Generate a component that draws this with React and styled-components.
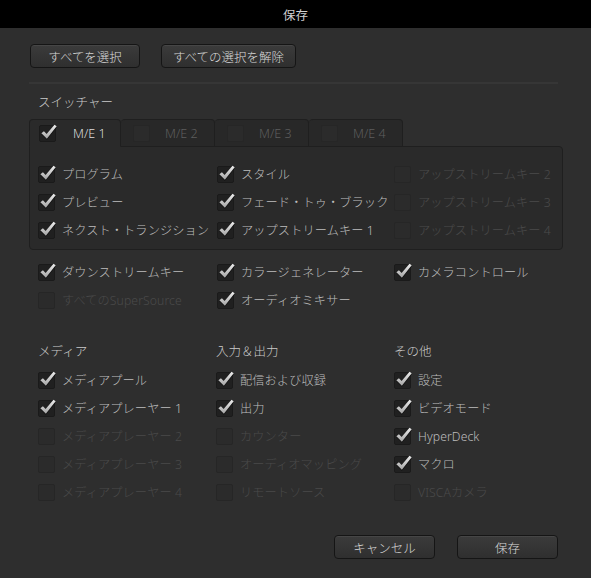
import styled, { createGlobalStyle } from "styled-components";

const GlobalStyle = createGlobalStyle`
    * { box-sizing: border-box; }
    body {
        margin: 0;
        background: #2e2e2e;
        font-family: "Noto Sans", "Noto Sans CJK JP", sans-serif;
    }
`

const switcherRows = [
    [["プログラム", true], ["スタイル", true], ["アップストリームキー 2", false, true]],
    [["プレビュー", true], ["フェード・トゥ・ブラック", true], ["アップストリームキー 3", false, true]],
    [["ネクスト・トランジション", true], ["アップストリームキー 1", true], ["アップストリームキー 4", false, true]],
]

const extraRows = [
    [["ダウンストリームキー", true], ["カラージェネレーター", true], ["カメラコントロール", true]],
    [["すべてのSuperSource", false, true], ["オーディオミキサー", true], null],
]

const sections = [
    {
        title: "メディア",
        items: [
            ["メディアプール", true],
            ["メディアプレーヤー 1", true],
            ["メディアプレーヤー 2", false, true],
            ["メディアプレーヤー 3", false, true],
            ["メディアプレーヤー 4", false, true],
        ],
    },
    {
        title: "入力＆出力",
        items: [
            ["配信および収録", true],
            ["出力", true],
            ["カウンター", false, true],
            ["オーディオマッピング", false, true],
            ["リモートソース", false, true],
        ],
    },
    {
        title: "その他",
        items: [
            ["設定", true],
            ["ビデオモード", true],
            ["HyperDeck", true],
            ["マクロ", true],
            ["VISCAカメラ", false, true],
        ],
    },
]

function Tick() {
    return (
        <TickSvg viewBox="0 0 20 20">
            <defs>
                <linearGradient id="tick" x1="0" y1="0" x2="0" y2="1">
                    <stop offset="0" stopColor="#eeeeee" />
                    <stop offset="1" stopColor="#a4a4a4" />
                </linearGradient>
            </defs>
            <path d="M2.5 10.8 L5.2 8.6 L8 11.6 L16.3 1.8 L18.6 3.4 L8.3 16.6 Z" fill="url(#tick)" />
        </TickSvg>
    )
}

function Check({ label, checked, disabled }) {
    return (
        <CheckRow>
            <Box $disabled={disabled}>{checked && <Tick />}</Box>
            <CheckLabel $disabled={disabled}>{label}</CheckLabel>
        </CheckRow>
    )
}

export default function App() {
    const tabs = ["M/E 1", "M/E 2", "M/E 3", "M/E 4"]

    return (
        <Window>
            <GlobalStyle />
            <TitleBar>保存</TitleBar>
            <Body>
                <TopButtons>
                    <Button $width={110}>すべてを選択</Button>
                    <Button $width={135}>すべての選択を解除</Button>
                </TopButtons>
                <Divider />

                <SectionTitle>スイッチャー</SectionTitle>
                <Tabs>
                    {tabs.map((t, i) => (
                        <Tab key={t} $active={i === 0}>
                            <Box $disabled={i !== 0}>{i === 0 && <Tick />}</Box>
                            <TabLabel $active={i === 0}>{t}</TabLabel>
                        </Tab>
                    ))}
                </Tabs>
                <Panel>
                    {switcherRows.map((row, r) => (
                        <Grid key={r}>
                            {row.map((c, i) => (
                                <Check key={i} label={c[0]} checked={c[1]} disabled={c[2]} />
                            ))}
                        </Grid>
                    ))}
                </Panel>

                <Extras>
                    {extraRows.map((row, r) => (
                        <Grid key={r}>
                            {row.map((c, i) =>
                                c ? <Check key={i} label={c[0]} checked={c[1]} disabled={c[2]} /> : <span key={i} />
                            )}
                        </Grid>
                    ))}
                </Extras>

                <Sections>
                    {sections.map((s) => (
                        <Column key={s.title}>
                            <ColumnTitle>{s.title}</ColumnTitle>
                            {s.items.map((c) => (
                                <Check key={c[0]} label={c[0]} checked={c[1]} disabled={c[2]} />
                            ))}
                        </Column>
                    ))}
                </Sections>

                <Footer>
                    <Button $width={101}>キャンセル</Button>
                    <Button $width={101}>保存</Button>
                </Footer>
            </Body>
        </Window>
    )
}

const Window = styled.div`
    width: 591px;
    height: 578px;
    background: #2e2e2e;
    display: flex;
    flex-direction: column;
    overflow: hidden;
`

const TitleBar = styled.div`
    height: 28px;
    background: #000000;
    color: #d0d0d0;
    font-size: 12.5px;
    display: flex;
    align-items: center;
    justify-content: center;
`

const Body = styled.div`
    flex: 1;
    padding: 16px 33px 0 29px;
    display: flex;
    flex-direction: column;
`

const TopButtons = styled.div`
    display: flex;
    gap: 21px;
    padding-left: 1px;
`

const Button = styled.button`
    width: ${(props) => props.$width}px;
    height: 24px;
    border: 1px solid #151515;
    border-radius: 4px;
    background: linear-gradient(#3b3b3b, #2f2f2f);
    box-shadow: inset 0 1px 0 rgba(255, 255, 255, 0.06);
    color: #d8d8d8;
    font-family: "Noto Sans", "Noto Sans CJK JP", sans-serif;
    font-size: 12.5px;
    font-weight: 300;
    padding: 0;
    display: flex;
    align-items: center;
    justify-content: center;
`

const Divider = styled.div`
    height: 2px;
    background: #363636;
    margin-top: 14px;
`

const SectionTitle = styled.div`
    color: #cacaca;
    font-size: 12.5px;
    font-weight: 300;
    height: 20px;
    line-height: 20px;
    margin: 9px 0 6px 9px;
`

const Tabs = styled.div`
    display: flex;
    height: 27px;
`

const Tab = styled.div`
    width: ${(props) => (props.$active ? 92 : 94)}px;
    display: flex;
    align-items: center;
    padding-left: ${(props) => (props.$active ? 9 : 12)}px;
    background: ${(props) => (props.$active ? "#2a2a2a" : "#282828")};
    border: 1px solid #1f1f1f;
    border-left-width: ${(props) => (props.$active ? 1 : 0)}px;
    border-bottom-color: ${(props) => (props.$active ? "#2a2a2a" : "#1f1f1f")};
    border-radius: 4px 4px 0 0;
    margin-bottom: -1px;
    position: relative;
    z-index: 1;
`

const TabLabel = styled.span`
    margin-left: ${(props) => (props.$active ? 17 : 15)}px;
    font-size: 12.5px;
    font-weight: 300;
    color: ${(props) => (props.$active ? "#dddddd" : "#5e5e5e")};
`

const Panel = styled.div`
    width: 534px;
    background: #2a2a2a;
    border: 1px solid #1f1f1f;
    border-radius: 0 4px 4px 4px;
    padding: 13px 0 5px 8px;
`

const Grid = styled.div`
    display: grid;
    grid-template-columns: 179px 177px 1fr;
`

const Extras = styled.div`
    padding: 8px 0 0 9px;
`

const CheckRow = styled.div`
    height: 28px;
    display: flex;
    align-items: center;
    white-space: nowrap;
`

const Box = styled.span`
    width: 17px;
    height: 17px;
    flex: none;
    border-radius: 2px;
    background: ${(props) => (props.$disabled ? "#2b2b2b" : "#202020")};
    border: 1px solid ${(props) => (props.$disabled ? "#262626" : "#1a1a1a")};
    position: relative;
`

const TickSvg = styled.svg`
    position: absolute;
    left: -1px;
    top: -3px;
    width: 19px;
    height: 19px;
    filter: drop-shadow(0 1px 0 rgba(0, 0, 0, 0.6));
`

const CheckLabel = styled.span`
    margin-left: 7px;
    font-size: 12.2px;
    font-weight: 300;
    letter-spacing: 0.1px;
    color: ${(props) => (props.$disabled ? "#4a4a4a" : "#bdbdbd")};
`

const Sections = styled.div`
    display: grid;
    grid-template-columns: 178px 178px 1fr;
    padding-left: 9px;
    margin-top: 26px;
`

const Column = styled.div`
    display: flex;
    flex-direction: column;
`

const ColumnTitle = styled.div`
    color: #cacaca;
    font-size: 12.5px;
    font-weight: 300;
    height: 24px;
    line-height: 24px;
    margin-bottom: 2px;
`

const Footer = styled.div`
    display: flex;
    justify-content: flex-end;
    gap: 22px;
    margin-top: 29px;
`
